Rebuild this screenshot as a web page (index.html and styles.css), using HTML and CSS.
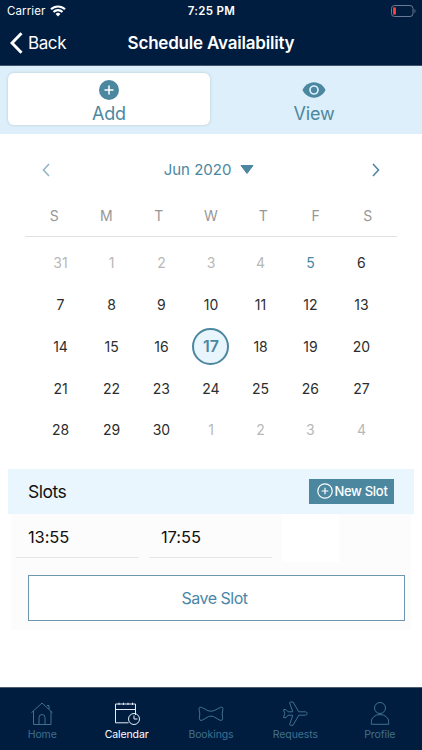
FILE: index.html
```html
<!DOCTYPE html>
<html lang="en">
<head>
    <meta charset="UTF-8">
    <meta name="viewport" content="width=device-width, initial-scale=1.0">
    <title>Schedule Availability</title>
    <link rel="stylesheet" href="styles.css">
</head>
<body>
    <header class="header">
        <div class="status">
            <div class="carrier">
                <span>Carrier</span>
                <svg width="16" height="12" viewBox="0 0 16 12" fill="none" stroke="#fff" stroke-width="2.1">
                    <path d="M1 4.3a10 10 0 0 1 14 0"/>
                    <path d="M3.5 7a6.4 6.4 0 0 1 9 0"/>
                    <path d="M8 11.4L5.6 9a3.4 3.4 0 0 1 4.8 0z" fill="#fff" stroke="none"/>
                </svg>
            </div>
            <span class="clock">7:25 PM</span>
            <svg class="battery" width="26" height="12" viewBox="0 0 26 12" fill="none">
                <rect x="1.500" y=".5" width="21.5" height="11" rx="3" stroke="#6b7a92"/>
                <rect x="3.100" y="2.2" width="2.8" height="7.6" rx="1" fill="#ff4438"/>
                <path d="M24.500 4v4c1.3-.5 1.3-3.500 0-4z" fill="#6b7a92"/>
            </svg>
        </div>
        <nav class="navbar">
            <a class="back">
                <svg width="13" height="22" viewBox="0 0 13 22" fill="none" stroke="#fff" stroke-width="3"><path d="M11.500 1.300L2 11l9.500 9.700"/></svg>
                <span>Back</span>
            </a>
            <h1 class="title">Schedule Availability</h1>
        </nav>
    </header>

    <section class="tabs">
        <div class="tab active">
            <svg width="24" height="24" viewBox="0 0 24 24">
                <circle cx="12" cy="12" r="10" fill="#4c87a0"/>
                <path d="M12 7.500v9M7.500 12h9" stroke="#fff" stroke-width="1.500"/>
            </svg>
            <span>Add</span>
        </div>
        <div class="tab">
            <svg width="24" height="24" viewBox="0 0 24 24">
                <path d="M12 4.300C6.500 4.300 2.300 8 .5 12c1.800 4 6 7.700 11.500 7.700S21.700 16 23.500 12C21.700 8 17.500 4.300 12 4.300z" fill="#4c87a0"/>
                <circle cx="12" cy="12" r="4" fill="#4c87a0" stroke="#dceffa" stroke-width="1.700"/>
            </svg>
            <span>View</span>
        </div>
    </section>

    <main>
        <section class="calendar">
            <div class="month">
                <svg class="prev" width="8" height="14" viewBox="0 0 8 14"><path d="M7 1L1.500 7 7 13"/></svg>
                <div class="month-name">
                    <span>Jun 2020</span>
                    <svg width="14" height="9" viewBox="0 0 14 9"><path d="M1 .5h12L7 8.500z" fill="#4c87a0" stroke="#4c87a0" stroke-linejoin="round"/></svg>
                </div>
                <svg class="next" width="8" height="14" viewBox="0 0 8 14"><path d="M1 1l5.500 6L1 13"/></svg>
            </div>
            <div class="weekdays">
                <span>S</span><span>M</span><span>T</span><span>W</span><span>T</span><span>F</span><span>S</span>
            </div>
            <div class="days">
                <span class="off">31</span><span class="off">1</span><span class="off">2</span><span class="off">3</span><span class="off">4</span><span class="today">5</span><span>6</span>
                <span>7</span><span>8</span><span>9</span><span>10</span><span>11</span><span>12</span><span>13</span>
                <span>14</span><span>15</span><span>16</span><span class="selected">17</span><span>18</span><span>19</span><span>20</span>
                <span>21</span><span>22</span><span>23</span><span>24</span><span>25</span><span>26</span><span>27</span>
                <span>28</span><span>29</span><span>30</span><span class="off">1</span><span class="off">2</span><span class="off">3</span><span class="off">4</span>
            </div>
        </section>

        <section class="slots">
            <div class="slots-header">
                <h2>Slots</h2>
                <button class="new-slot">
                    <svg width="16" height="16" viewBox="0 0 16 16" fill="none" stroke="#fff" stroke-width="1.200"><circle cx="8" cy="8" r="7.200"/><path d="M8 4.700v6.600M4.700 8h6.600"/></svg>
                    <span>New Slot</span>
                </button>
            </div>
            <div class="slots-body">
                <div class="times">
                    <div class="time">13:55</div>
                    <div class="time">17:55</div>
                    <div class="blank"></div>
                </div>
                <button class="save">Save Slot</button>
            </div>
        </section>
    </main>

    <footer class="tabbar">
        <a class="item">
            <svg width="26" height="26" viewBox="0 0 26 26"><path d="M2.500 11.700L13 2l10.500 9.700M4.500 10v13.500h17.500V10M10 23.500v-7a3 3 0 0 1 6 0v7M20 8V4.500h-2"/></svg>
            <span>Home</span>
        </a>
        <a class="item current">
            <svg width="26" height="26" viewBox="0 0 26 26"><path d="M14.500 21.800H1.500V3h20v11M1.500 8.500h20M5 4V1.700M9.500 4V1.700M14 4V1.700M18.500 4V1.700"/><circle cx="20" cy="18" r="5.500"/><path d="M20 14.500V18h3.500"/></svg>
            <span>Calendar</span>
        </a>
        <a class="item">
            <svg width="26" height="26" viewBox="0 0 26 26"><path d="M10 9.700L3.500 6.300Q1.200 5.500 1 7.500L1.800 13 1.300 17.500Q1.500 20.200 4 19.300L10.500 15.600Q13 14.600 15.500 15.600L22 19.300Q24.700 20 24.700 17.500L24.200 13 25 7.500Q24.700 5.500 22.500 6.300L16 9.700Q13 10.800 10 9.700z"/></svg>
            <span>Bookings</span>
        </a>
        <a class="item">
            <svg width="26" height="26" viewBox="0 0 26 26"><path d="M10.800 10.800L7.700 2Q7.500 1 8.500 1H11L16.800 10.800H23.500Q25.200 11.200 25.200 12.500T23.500 14.200H16.800L11 24.300H8.500Q7.500 24.300 7.700 23.300L10.800 14.200H6L4 16.600H1.500L2.700 12.500 1.500 8.600H4L6 10.800z"/></svg>
            <span>Requests</span>
        </a>
        <a class="item">
            <svg width="26" height="26" viewBox="0 0 26 26"><circle cx="13" cy="7" r="5.500"/><path d="M4.300 23.300v-2.500a8.700 7.300 0 0 1 17.400 0v2.500z"/></svg>
            <span>Profile</span>
        </a>
    </footer>
</body>
</html>
```
FILE: styles.css
```css
* {
    box-sizing: border-box;
}

body {
    margin: 0;
    height: 750px;
    display: flex;
    flex-direction: column;
    font-family: Inter, "Liberation Sans", sans-serif;
    background-color: #fff;
    color: #2d2d2d;
    overflow: hidden;
}

h1, h2 {
    margin: 0;
}

svg {
    display: block;
    flex: none;
}

button {
    font-family: inherit;
    padding: 0;
}

.header {
    height: 66px;
    background-color: #001d40;
    border-bottom: 1px solid #41536d;
    color: #fff;
}

.status {
    height: 22px;
    padding: 0 6px 0 7px;
    display: grid;
    grid-template-columns: 1fr auto 1fr;
    align-items: center;
    font-size: 11.5px;
}

.carrier {
    display: flex;
    align-items: center;
    gap: 5px;
    letter-spacing: 0.1px;
}

.clock {
    font-weight: 600;
    letter-spacing: 0.3px;
}

.battery {
    justify-self: end;
}

.navbar {
    height: 42px;
    padding: 0 10px;
    display: grid;
    grid-template-columns: 1fr auto 1fr;
    align-items: center;
}

.back {
    display: flex;
    align-items: center;
    gap: 5px;
    font-size: 17px;
    letter-spacing: -0.4px;
}

.title {
    font-size: 17px;
    font-weight: 600;
    letter-spacing: -0.2px;
}

.tabs {
    height: 68px;
    padding: 7px 4px 9px 8px;
    display: grid;
    grid-template-columns: 202px 1fr;
    background-color: #dceffa;
}

.tab {
    display: flex;
    flex-direction: column;
    align-items: center;
    padding-top: 5px;
    border-radius: 6px;
    font-size: 18px;
    line-height: 23px;
    letter-spacing: -0.2px;
    color: #4c87a0;
}

.tab.active {
    background-color: #fff;
    box-shadow: 0 0 3px rgba(100, 120, 110, 0.3);
}

.calendar {
    padding: 20px 25px 0;
}

.month {
    height: 32px;
    padding: 0 17px;
    display: grid;
    grid-template-columns: 1fr auto 1fr;
    align-items: center;
    color: #4c87a0;
    font-size: 15px;
}

.month-name {
    display: flex;
    align-items: center;
    gap: 9px;
    padding-right: 4px;
    line-height: 18px;
    margin-bottom: 1px;
}

.prev, .next {
    fill: none;
    stroke: #4c87a0;
    stroke-width: 1.6;
}

.prev {
    opacity: 0.6;
}

.next {
    justify-self: end;
}

.weekdays {
    height: 51px;
    padding: 9px 3px 0;
    border-bottom: 1px solid #e1e1e1;
    display: grid;
    grid-template-columns: repeat(7, 1fr);
    align-items: center;
    text-align: center;
    font-size: 14px;
    color: #979797;
}

.days {
    margin: 5px 9.5px 0;
    display: grid;
    grid-template-columns: 52fr 50fr 49.5fr 49.5fr 49.5fr 50fr 52fr;
    grid-auto-rows: 41.75px;
    place-items: center;
    font-size: 14px;
}

.off {
    color: #b8b8b8;
}

.today {
    color: #4c87a0;
}

.selected {
    width: 37px;
    height: 37px;
    border: 2px solid #4c87a0;
    border-radius: 50%;
    background-color: #e8f5fd;
    color: #4c87a0;
    font-size: 16px;
    font-weight: 600;
    line-height: 33px;
    text-align: center;
}

.slots {
    margin: 18px 8px 0;
}

.slots-header {
    height: 45px;
    padding: 0 20px;
    display: flex;
    align-items: center;
    justify-content: space-between;
    background-color: #eaf6fd;
}

.slots-header h2 {
    font-size: 17.5px;
    font-weight: 400;
    letter-spacing: -0.5px;
    color: #111;
}

.new-slot {
    width: 85px;
    height: 25px;
    padding-left: 2px;
    display: flex;
    align-items: center;
    justify-content: center;
    gap: 1px;
    border: none;
    background-color: #4c87a0;
    color: #fff;
    font-size: 13px;
    font-weight: 500;
    letter-spacing: -0.3px;
}

.slots-body {
    margin: 0 3px;
    height: 116px;
    padding: 0 7px 0 5px;
    background-color: #fcfcfc;
}

.times {
    display: flex;
    gap: 10px;
}

.time {
    width: 123px;
    height: 44px;
    padding-left: 12px;
    border-bottom: 1px solid #e6e6e6;
    font-size: 16.5px;
    line-height: 46px;
    letter-spacing: -0.1px;
    color: #111;
}

.blank {
    width: 57px;
    height: 48px;
    background-color: #fff;
}

.save {
    display: block;
    width: 377px;
    height: 46px;
    margin: 13px 0 0 12px;
    border: 1px solid #6d97af;
    background-color: #fff;
    color: #4a86a8;
    font-size: 16px;
    letter-spacing: -0.5px;
    padding-right: 4px;
}

.tabbar {
    margin-top: auto;
    height: 63px;
    padding-top: 13px;
    border-top: 1px solid #4d5c74;
    display: grid;
    grid-template-columns: repeat(5, 1fr);
    background-color: #001d40;
}

.item {
    display: flex;
    flex-direction: column;
    align-items: center;
    gap: 1px;
    font-size: 10.5px;
    line-height: 14px;
    letter-spacing: -0.1px;
    color: #40708c;
}

.item svg {
    fill: none;
    stroke: #40708c;
    stroke-width: 1;
    stroke-linejoin: round;
}

.current {
    color: #fff;
}

.current svg {
    stroke: #e4edf5;
}
```
